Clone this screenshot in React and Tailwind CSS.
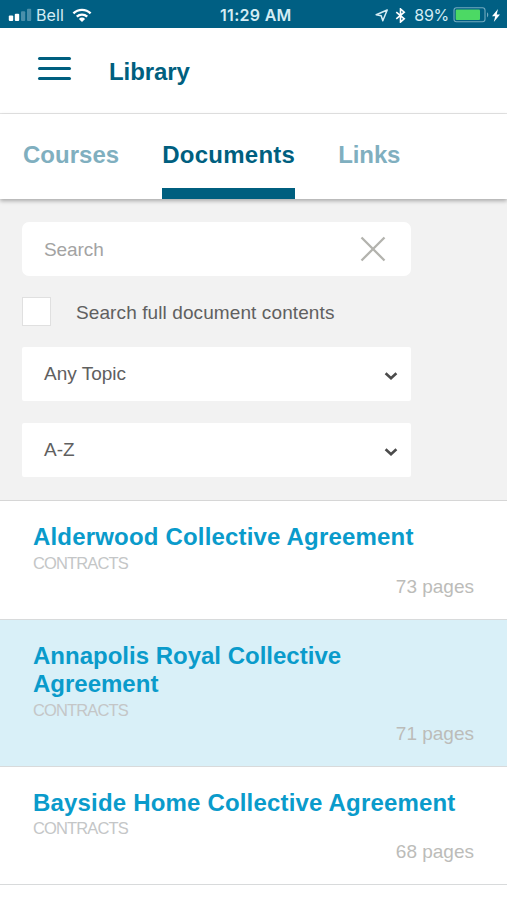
import React from 'react';

const tabs = [
  { label: 'Courses', spacing: 'tracking-[0.03px]' },
  { label: 'Documents', spacing: 'tracking-[0.25px]', active: true },
  { label: 'Links', spacing: 'tracking-[-0.1px]' },
];

const documents = [
  { title: 'Alderwood Collective Agreement', type: 'CONTRACTS', pages: 73, spacing: 'tracking-[0.18px]' },
  { title: 'Annapolis Royal Collective Agreement', type: 'CONTRACTS', pages: 71, spacing: 'tracking-[0px]', selected: true },
  { title: 'Bayside Home Collective Agreement', type: 'CONTRACTS', pages: 68, spacing: 'tracking-[0.18px]' },
];

const StatusBar = () => (
  <div className="relative flex h-7 items-center justify-between bg-[#005f83] pl-2 pr-[7px] pt-0.5 font-[Inter,sans-serif] text-[#d3ecf4]">
    <div className="flex items-center">
      <svg className="h-[14px] w-6" viewBox="0 0 24 14" fill="currentColor">
        <rect x="0.8" y="7.6" width="4.4" height="5.4" rx="1" fill="#fff" />
        <rect x="6.8" y="5.8" width="4.4" height="7.2" rx="1" fill="#fff" />
        <rect x="13" y="3.2" width="4.2" height="9.8" rx="1" opacity="0.35" />
        <rect x="19" y="0.8" width="4.2" height="12.2" rx="1" opacity="0.35" />
      </svg>
      <span className="ml-1 text-[16px] leading-none tracking-[0.1px]">Bell</span>
      <svg className="ml-2 h-[15px] w-5" viewBox="0 0 20 15" fill="none" stroke="#fff" strokeWidth="2.4">
        <path d="M1.4 5.4a12.3 12.3 0 0 1 17.2 0" />
        <path d="M4.8 8.7a7.6 7.6 0 0 1 10.4 0" />
        <path d="M10 14 6.9 10.9a4.4 4.4 0 0 1 6.2 0z" fill="#fff" stroke="none" />
      </svg>
    </div>
    <span className="absolute left-[220px] text-[16px] font-semibold leading-none tracking-[0.3px]">11:29 AM</span>
    <div className="flex items-center">
      <svg className="h-[13px] w-[13px]" viewBox="0 0 13 13" fill="none" stroke="currentColor" strokeWidth="1.5" strokeLinejoin="round">
        <path d="M12.2 1 1.2 5.8l5 1 1.6 5z" />
      </svg>
      <svg className="ml-[7px] h-[15px] w-[11px]" viewBox="0 0 11 16" fill="none" stroke="#fff" strokeWidth="1.7">
        <path d="M1 4.3 9.5 11.5 5.5 15V1l4 3.5L1 11.7" />
      </svg>
      <span className="ml-2 text-[16px] leading-none tracking-[-0.3px]">89%</span>
      <svg className="ml-1 h-4 w-[36px]" viewBox="0 0 36 16">
        <rect x="1" y="0.8" width="31" height="14" rx="2.5" fill="none" stroke="#72abc0" strokeWidth="1.1" />
        <rect x="2.7" y="2.6" width="24.3" height="10.4" rx="1" fill="#4cd964" />
        <path d="M34 5.2c1.7 1 1.7 4.2 0 5.2z" fill="#72abc0" />
      </svg>
      <svg className="ml-[3px] h-[13px] w-2" viewBox="0 0 8 13" fill="#fff">
        <path d="M6 0 0 7.2h3.2L1.8 13 8 5.5H4.7z" />
      </svg>
    </div>
  </div>
);

const Header = () => (
  <header className="flex h-[86px] items-center border-b border-[#e6e6e6] bg-white pl-[38px] text-[#005f7f]">
    <button className="mb-1 flex w-[33px] flex-col gap-[7px]">
      <span className="h-[3px] w-full rounded-full bg-[#005f7f]" />
      <span className="h-[3px] w-full rounded-full bg-[#005f7f]" />
      <span className="h-[3px] w-full rounded-full bg-[#005f7f]" />
    </button>
    <h1 className="ml-[38px] mt-[3px] text-[24px] font-bold leading-7 tracking-[-0.1px]">Library</h1>
  </header>
);

const Tabs = () => (
  <nav className="relative flex h-[85px] gap-[43px] bg-white pl-[23px] shadow-[0_2px_4px_rgba(0,0,0,0.3)]">
    {tabs.map((tab) => (
      <button
        key={tab.label}
        className={`flex border-b-[11px] pt-[27px] text-[24px] font-bold leading-7 ${tab.spacing} ${
          tab.active ? 'border-[#005f7f] text-[#005f7f]' : 'border-transparent text-[#80afbf]'
        }`}
      >
        {tab.label}
      </button>
    ))}
  </nav>
);

const SelectBox = ({ label }) => (
  <div className="flex h-[54px] w-[389px] items-center justify-between rounded-[2px] bg-white pl-[22px] pr-[13px] text-[#606060]">
    <span className="text-[19px] leading-6">{label}</span>
    <svg className="mt-1 h-2 w-3.5" viewBox="0 0 14 8" fill="none" stroke="#4b4b4b" strokeWidth="2.6">
      <path d="M1.6 1.2 7 6.2l5.4-5" />
    </svg>
  </div>
);

const Filters = () => (
  <section className="h-[302px] border-b border-[#d6d6d6] bg-[#f2f2f2] pl-[22px] pt-[23px]">
    <div className="flex h-[54px] w-[389px] items-center justify-between rounded-[7px] bg-white pl-[22px] pr-[25px]">
      <span className="pt-0.5 text-[19px] leading-6 tracking-[-0.1px] text-[#a3a3a3]">Search</span>
      <svg className="h-[26px] w-[26px]" viewBox="0 0 26 26" fill="none" stroke="#b3b3ae" strokeWidth="2.3">
        <path d="M1.5 1.5l23 23M24.5 1.5l-23 23" />
      </svg>
    </div>
    <label className="mt-[21px] flex h-[29px] items-center">
      <span className="h-[29px] w-[29px] border-[1.5px] border-[#e0e0e0] bg-white" />
      <span className="ml-[25px] pt-0.5 text-[19px] leading-6 tracking-[0.1px] text-[#606060]">Search full document contents</span>
    </label>
    <div className="mt-[21px] flex flex-col gap-[22px]">
      <SelectBox label="Any Topic" />
      <SelectBox label="A-Z" />
    </div>
  </section>
);

const DocumentRow = ({ doc }) => (
  <li className={`border-b border-[#d8dadb] px-[33px] pb-5 pt-[22px] ${doc.selected ? 'bg-[#d9f0f8]' : 'bg-white'}`}>
    <h2 className={`pr-3 text-[24px] font-bold leading-[28.5px] text-[#0a9bcb] ${doc.spacing}`}>{doc.title}</h2>
    <p className="text-[16.5px] leading-[22px] tracking-[-0.87px] text-[#c4c6c7]">{doc.type}</p>
    <p className="mt-px text-right text-[19px] leading-6 text-[#bcbcb9]">{doc.pages} pages</p>
  </li>
);

const App = () => {
  return (
    <div className="flex h-[900px] w-full flex-col overflow-hidden bg-white font-['Liberation_Sans',Arial,sans-serif]">
      <StatusBar />
      <Header />
      <Tabs />
      <Filters />
      <ul>
        {documents.map((doc) => (
          <DocumentRow key={doc.title} doc={doc} />
        ))}
      </ul>
    </div>
  );
};

export default App;
